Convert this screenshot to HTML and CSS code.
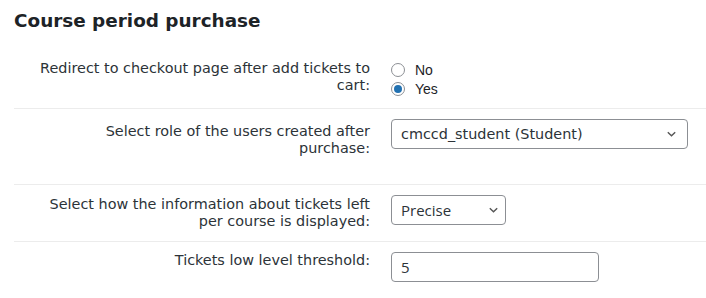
FILE: index.html
```html
<!DOCTYPE html>
<html lang="en">

<head>
    <meta charset="UTF-8">
    <meta name="viewport" content="width=device-width, initial-scale=1.0">
    <title>Course period purchase</title>
    <link rel="stylesheet" href="styles.css">
</head>

<body>

    <h2>Course period purchase</h2>

    <div class="settings">

        <div class="row row-redirect">
            <label class="label">Redirect to checkout page after add tickets to cart:</label>
            <div class="field radios">
                <label class="radio"><input type="radio" name="redirect"> No</label>
                <label class="radio"><input type="radio" name="redirect" checked> Yes</label>
            </div>
        </div>

        <div class="row row-role">
            <label class="label">Select role of the users created after purchase:</label>
            <div class="field">
                <div class="select select-role">
                    <span>cmccd_student (Student)</span>
                    <svg width="9" height="6" viewBox="0 0 9 6"><path d="M.8 1.2 4.5 4.8l3.7-3.6" fill="none" stroke="#555" stroke-width="1.4"/></svg>
                </div>
            </div>
        </div>

        <div class="row row-display">
            <label class="label">Select how the information about tickets left per course is displayed:</label>
            <div class="field">
                <div class="select select-display">
                    <span>Precise</span>
                    <svg width="9" height="6" viewBox="0 0 9 6"><path d="M.8 1.2 4.5 4.8l3.7-3.6" fill="none" stroke="#555" stroke-width="1.4"/></svg>
                </div>
            </div>
        </div>

        <div class="row row-threshold">
            <label class="label">Tickets low level threshold:</label>
            <div class="field">
                <div class="text-input">5</div>
            </div>
        </div>

    </div>

</body>

</html>
```

FILE: styles.css
```css
* {
    box-sizing: border-box;
}

body {
    margin: 0;
    padding: 0 0 0 14px;
    background: #fff;
    color: #1d2327;
    font-family: 'DejaVu Sans', Verdana, sans-serif;
    font-size: 14.4px;
}

h2 {
    margin: 0;
    padding-top: 10px;
    font-size: 18.4px;
    line-height: 22px;
    font-weight: bold;
    color: #1d2327;
}

.row {
    display: grid;
    grid-template-columns: 336px 1fr;
    column-gap: 21px;
    align-items: start;
    padding-left: 20px;
    border-bottom: 1px solid #ececec;
}

.row:last-child {
    border-bottom: none;
}

.label {
    text-align: right;
    line-height: 17px;
    color: #2c3338;
}

.row-redirect {
    padding-top: 28px;
    padding-bottom: 10px;
}

.row-role {
    padding-top: 10px;
    padding-bottom: 27px;
}

.row-role .label {
    padding-top: 4px;
}

.row-display {
    padding-top: 10px;
    padding-bottom: 11px;
}

.row-display .label {
    padding-top: 1px;
}

.row-threshold {
    padding-top: 10px;
    padding-bottom: 10px;
}

.radios {
    display: flex;
    flex-direction: column;
}

.radio {
    display: flex;
    align-items: center;
    gap: 10px;
    height: 19px;
    font-family: 'Liberation Sans', Arial, sans-serif;
    font-size: 14px;
    color: #1d2327;
}

.radio input {
    appearance: none;
    margin: 0;
    width: 14px;
    height: 14px;
    border: 1px solid #8c8f94;
    border-radius: 50%;
    background: #fff;
    display: grid;
    place-items: center;
}

.radio input:checked::before {
    content: "";
    width: 8px;
    height: 8px;
    border-radius: 50%;
    background: #2271b1;
}

.select,
.text-input {
    display: flex;
    align-items: center;
    justify-content: space-between;
    height: 30px;
    border: 1px solid #8c8f94;
    border-radius: 4px;
    background: #fff;
    color: #2c3338;
}

.select-role {
    width: 297px;
    padding: 0 11px 0 9px;
}

.select-display {
    width: 115px;
    padding: 0 7px 0 9px;
    font-family: 'Open Sans', sans-serif;
    font-size: 15px;
}

.text-input {
    width: 208px;
    padding: 0 9px;
    font-family: 'Open Sans', sans-serif;
    font-size: 15px;
}
```
